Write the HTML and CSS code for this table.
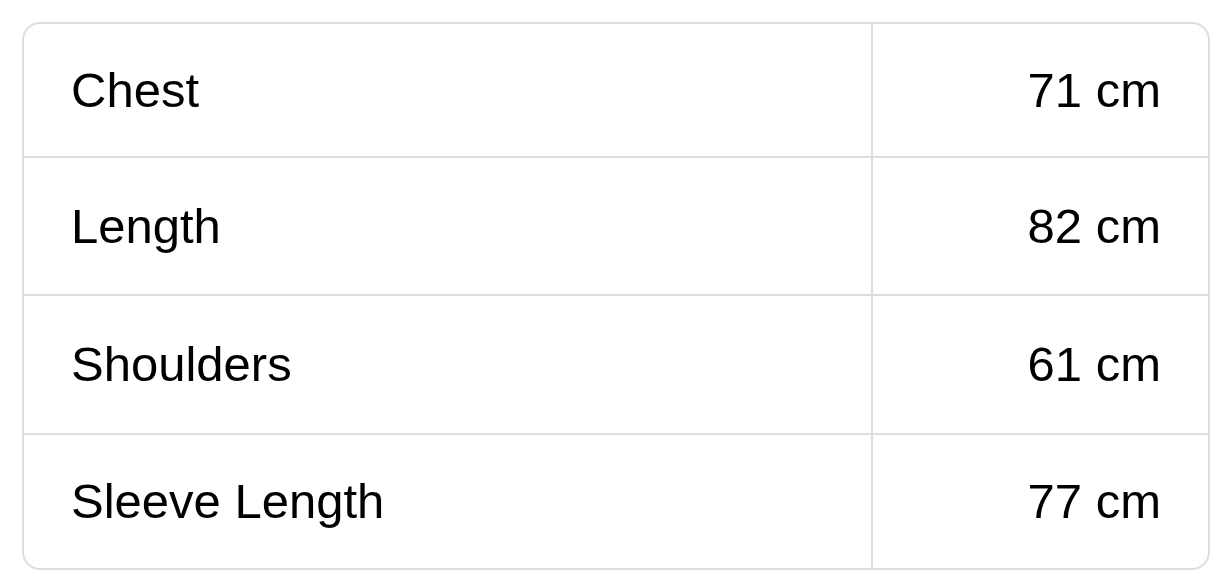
FILE: index.html
```html
<!DOCTYPE html>
<html lang="en">
<head>
<meta charset="utf-8">
<title>Measurements</title>
<link rel="stylesheet" href="styles.css">
</head>
<body>
  <div class="card">
    <table class="measures">
      <tbody>
        <tr><td class="label">Chest</td><td class="value">71 cm</td></tr>
        <tr><td class="label">Length</td><td class="value">82 cm</td></tr>
        <tr><td class="label">Shoulders</td><td class="value">61 cm</td></tr>
        <tr><td class="label">Sleeve Length</td><td class="value">77 cm</td></tr>
      </tbody>
    </table>
  </div>
</body>
</html>
```

FILE: styles.css
```css
html, body {
  margin: 0;
  padding: 0;
  background: #ffffff;
}

body {
  padding: 22px 14px 0 22px;
  font-family: "Liberation Sans", Arial, Helvetica, sans-serif;
  color: #000000;
}

.card {
  width: 1188px;
  box-sizing: border-box;
  border: 2px solid #dedede;
  border-radius: 18px;
  overflow: hidden;
  background: #ffffff;
}

.measures {
  width: 100%;
  border-collapse: collapse;
  border-spacing: 0;
}

.measures td {
  height: 136px;
  padding: 0 47px;
  font-size: 49px;
  line-height: 1;
  border-bottom: 2px solid #dedede;
  vertical-align: middle;
}

.measures tr:first-child td {
  height: 132px;
}

.measures tr:last-child td {
  height: 133px;
  border-bottom: none;
}

.measures tr:nth-child(3) td {
  height: 137px;
}

.measures .label {
  width: 753px;
  text-align: left;
  border-right: 2px solid #dedede;
}

.measures .value {
  text-align: right;
  padding-right: 47px;
}
```
